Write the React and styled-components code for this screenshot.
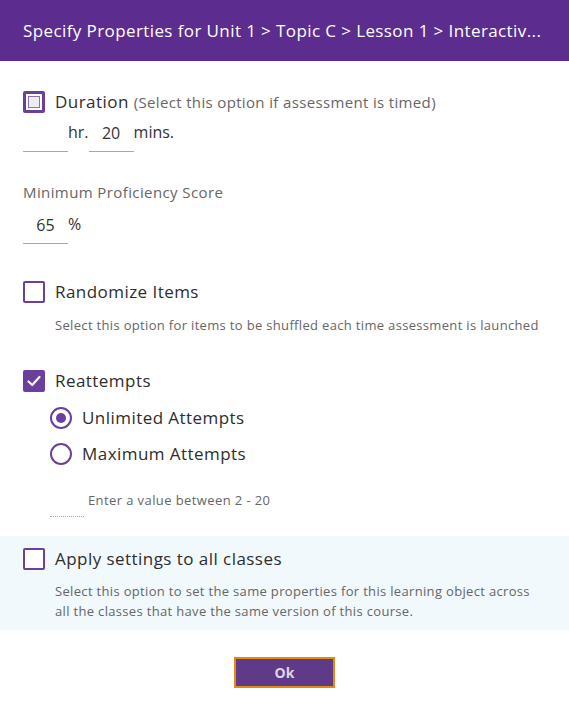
import React from "react";
import styled, { createGlobalStyle } from "styled-components";

const Global = createGlobalStyle`
  html, body { margin: 0; padding: 0; background: #fff; }
  body { font-family: "Open Sans", "Noto Sans", sans-serif; color: #333; }
  * { box-sizing: border-box; }
`;

const Dialog = styled.div`
  width: 569px;
  height: 712px;
  display: flex;
  flex-direction: column;
  background: #fff;
`;

const Header = styled.div`
  height: 61px;
  flex: none;
  background: #5c2d8e;
  display: flex;
  align-items: center;
  padding: 0 23px;
  color: #fff;
  font-size: 17px;
  letter-spacing: 0.4px;
  font-weight: 500;
  white-space: nowrap;
  overflow: hidden;
`;

const Body = styled.div`
  display: flex;
  flex-direction: column;
  padding: 30px 0 0;
`;

const Block = styled.div`
  display: flex;
  flex-direction: column;
  padding: 0 23px;
  margin-top: ${(p) => p.$mt || 0}px;
`;

const OptionRow = styled.label`
  display: flex;
  align-items: center;
  gap: 10px;
  margin-left: ${(p) => p.$indent || 0}px;
  margin-top: ${(p) => p.$mt || 0}px;
  font-size: 17px;
  letter-spacing: 0.45px;
  color: #2d2d2d;
  line-height: 22px;
`;

const Box = styled.span`
  width: 22px;
  height: 22px;
  flex: none;
  border: 2px solid #6a3f9e;
  border-radius: 2px;
  background: ${(p) => (p.$checked ? "#6a3f9e" : "#fff")};
  display: flex;
  align-items: center;
  justify-content: center;
  ${(p) =>
    p.$focus &&
    `border-width: 3px; box-shadow: inset 0 0 0 2px #fff, inset 0 0 0 3px #8d6fb8; background: #eeecf1;`}
`;

const Radio = styled.span`
  width: 22px;
  height: 22px;
  flex: none;
  border: 2px solid #6a3f9e;
  border-radius: 50%;
  display: flex;
  align-items: center;
  justify-content: center;
  &::after {
    content: "";
    width: 10px;
    height: 10px;
    border-radius: 50%;
    background: ${(p) => (p.$checked ? "#6a3f9e" : "transparent")};
  }
`;

const Hint = styled.span`
  font-size: 15px;
  letter-spacing: 0.35px;
  color: #666;
`;

const Desc = styled.div`
  font-size: 13px;
  letter-spacing: 0.33px;
  line-height: ${(p) => p.$lh || 18}px;
  color: #666;
  margin-left: 32px;
  margin-top: ${(p) => p.$mt || 0}px;
`;

const FieldRow = styled.div`
  display: flex;
  align-items: flex-start;
  margin-top: ${(p) => p.$mt || 0}px;
  margin-left: ${(p) => p.$indent || 0}px;
`;

const Field = styled.input`
  width: ${(p) => p.$w || 45}px;
  height: ${(p) => p.$h || 30}px;
  padding: 0 0 8px;
  border: none;
  border-bottom: 1px ${(p) => (p.$dotted ? "dotted" : "solid")} #a8a8a8;
  font-family: inherit;
  font-size: 16px;
  color: #333;
  text-align: center;
  background: transparent;
  outline: none;
`;

const Unit = styled.span`
  font-size: 16px;
  line-height: 21px;
  color: #333;
  min-width: ${(p) => p.$minw || 0}px;
`;

const Label = styled.div`
  font-size: 15px;
  letter-spacing: 0.4px;
  line-height: 20px;
  color: #666;
`;

const FieldHint = styled.span`
  font-size: 13px;
  letter-spacing: 0.4px;
  line-height: 18px;
  color: #666;
  margin-left: 4px;
`;

const ApplySection = styled.div`
  margin-top: 19px;
  background: #f2f9fd;
  padding: 12px 23px 9px;
  display: flex;
  flex-direction: column;
`;

const Footer = styled.div`
  display: flex;
  justify-content: center;
  padding-top: 27px;
`;

const OkButton = styled.button`
  width: 101px;
  height: 31px;
  background: #5f3a88;
  border: 2px solid #e28c0c;
  color: #ddd5ea;
  font-family: inherit;
  font-size: 14px;
  font-weight: 700;
  cursor: pointer;
`;

const Check = () => (
  <svg width="16" height="16" viewBox="0 0 16 16" fill="none">
    <path d="M2.5 8.5 L6.2 12 L13.5 4" stroke="#fff" strokeWidth="2.2" strokeLinecap="round" strokeLinejoin="round" />
  </svg>
);

export default function App() {
  return (
    <>
      <Global />
      <Dialog>
        <Header>Specify Properties for Unit 1 &gt; Topic C &gt; Lesson 1 &gt; Interactiv...</Header>
        <Body>
          <Block>
            <OptionRow>
              <Box $focus />
              <span>
                Duration <Hint>(Select this option if assessment is timed)</Hint>
              </span>
            </OptionRow>
            <FieldRow $mt={9}>
              <Field readOnly value="" />
              <Unit $minw={20}>hr.</Unit>
              <Field readOnly value="20" />
              <Unit>mins.</Unit>
            </FieldRow>
          </Block>

          <Block $mt={30}>
            <Label>Minimum Proficiency Score</Label>
            <FieldRow $mt={12}>
              <Field readOnly value="65" />
              <Unit>%</Unit>
            </FieldRow>
          </Block>

          <Block $mt={37}>
            <OptionRow>
              <Box />
              <span>Randomize Items</span>
            </OptionRow>
            <Desc $mt={13}>Select this option for items to be shuffled each time assessment is launched</Desc>
          </Block>

          <Block $mt={36}>
            <OptionRow>
              <Box $checked>
                <Check />
              </Box>
              <span>Reattempts</span>
            </OptionRow>
            <OptionRow $indent={27} $mt={15}>
              <Radio $checked />
              <span>Unlimited Attempts</span>
            </OptionRow>
            <OptionRow $indent={27} $mt={14}>
              <Radio />
              <span>Maximum Attempts</span>
            </OptionRow>
            <FieldRow $indent={27} $mt={26}>
              <Field readOnly value="" $w={34} $h={26} $dotted />
              <FieldHint>Enter a value between 2 - 20</FieldHint>
            </FieldRow>
          </Block>

          <ApplySection>
            <OptionRow>
              <Box />
              <span>Apply settings to all classes</span>
            </OptionRow>
            <Desc $mt={11} $lh={20}>
              Select this option to set the same properties for this learning object across
              <br />
              all the classes that have the same version of this course.
            </Desc>
          </ApplySection>

          <Footer>
            <OkButton>Ok</OkButton>
          </Footer>
        </Body>
      </Dialog>
    </>
  );
}
